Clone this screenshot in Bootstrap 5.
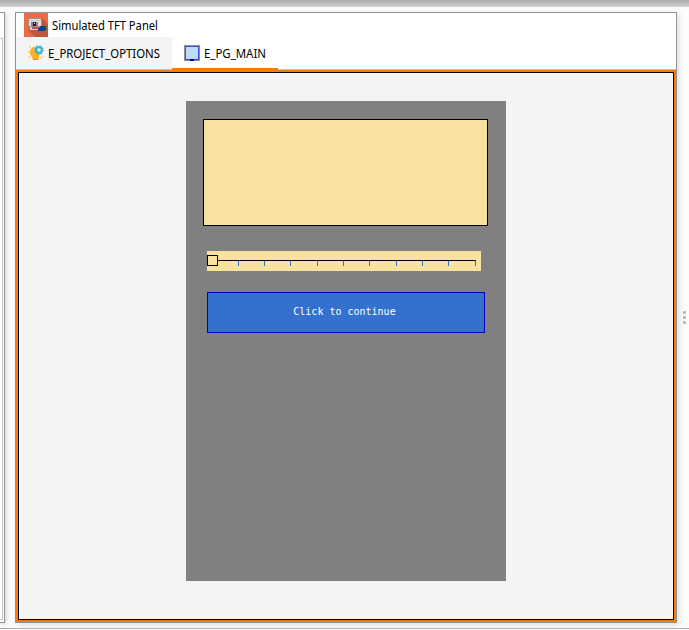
<!DOCTYPE html>
<html lang="en">
<head>
<meta charset="utf-8">
<meta name="viewport" content="width=device-width, initial-scale=1">
<title>Simulated TFT Panel</title>
<link rel="stylesheet" href="https://cdn.jsdelivr.net/npm/bootstrap@5.3.0/dist/css/bootstrap.min.css">
<style>
body{width:689px;height:630px;background:#fcfcfc;font:12px/16px "Noto Sans","Open Sans",sans-serif;color:#000}
.topstrip{height:7px;background:linear-gradient(#aaa,#d2d2d2);flex:none}
.workspace{height:622px;padding-top:5px;border-bottom:1px solid #ababab}
.side-pane{width:5px;height:611px;border:solid #939393;border-width:1px 1px 1px 0;background:#fff;box-shadow:1px 1px 5px #ccc;padding-top:25px}
.side-pane div{width:3px;height:582px;border:solid #c4c4c4;border-width:1px 1px 1px 0;background:#fff}
.tft{width:662px;height:611px;margin-left:10px;border:1px solid #939393;background:#fff;box-shadow:2px 2px 6px #ddd}
.title-row{height:24px;padding-left:8px}
.title-row svg,.tab svg{flex:none;display:block}
.tabs{height:33px;border-bottom:1px solid #c0c0c0}
.tab{height:32px}
.tab-a{width:156px;background:#f4f4f4;padding-left:12px}
.tab-b{width:106px;padding-left:12px;border-bottom:2px solid #fb7b00;height:33px}
.canvas-wrap{height:552px;border:2px solid #fb7b00}
.canvas-in{height:548px;border:1px solid #000;background:#f4f4f4;padding:28px 0 0 167px}
.screen{width:320px;height:480px;background:#808080;padding:18px 0 0 17px}
.textbox{width:285px;height:107px;border:1px solid #000;background:#f9e2a0}
.slider{width:274px;height:20px;margin:25px 0 21px 4px;background:#f9e2a0}
.slider svg{display:block}
.tft-btn{width:278px;height:41px;margin-left:4px;border:1px solid #0000c0;border-radius:0;background:#3470cd;color:#fff;font:10px/12px "DejaVu Sans Mono",monospace;padding:0 3px 1px 0}
.grip{width:3px;margin-left:6px;padding-top:299px;gap:2px}
.grip i{width:3px;height:3px;background:#b8b8b8;border-radius:1px}
</style>
<script src="https://cdn.jsdelivr.net/npm/bootstrap@5.3.0/dist/js/bootstrap.bundle.min.js"></script>
</head>
<body class="overflow-hidden d-flex flex-column">
<div class="topstrip"></div>
<main class="workspace d-flex align-items-start">
  <aside class="side-pane"><div></div></aside>
  <section class="tft">
    <header class="title-row d-flex align-items-center">
      <svg width="24" height="24"><path fill="#e86c47" d="M0 0h24v24H0z"/><path fill="#bd583c" d="M18 5l6 6v13H11l-7-7z"/><path fill="#e4e2dc" stroke="#8c8780" stroke-width=".8" d="M4.500 5.500h13v8h-13z"/><path fill="#c8c6c2" d="M5 7h12v1H5z"/><path fill="#888" d="M7 9h7v4H7z"/><path fill="#222" d="M9 9h3v4H9z"/><path fill="#fff" d="M10 10h1v1h-1z"/><path fill="#d4d2cc" d="M6 14h2v2h7v1H6z"/><path fill="#777" d="M8 14h6v1H8z"/><path fill="#173d89" d="M16 13h6v4h-1v1h-7v-3h2z"/></svg>
      <svg class="ms-1 overflow-visible" width="120" height="17"><text x="0" y="13" textLength="106" lengthAdjust="spacingAndGlyphs">Simulated TFT Panel</text></svg>
    </header>
    <nav class="tabs d-flex">
      <div class="tab tab-a d-flex align-items-center">
        <svg width="16" height="16"><path fill="#ffb126" d="M5 2h4l1 3h3v3l-2 3v2l-1 2H5l-1-3-2-3V5z"/><path stroke="#f5bd65" d="M0 7h2M1 1l2 2M0 13l3-2M14 11l1 1M12 13h2"/><circle cx="11" cy="5" r="2.800" fill="#e9f7fa" stroke="#2eb4d8" stroke-width="2"/><circle cx="11" cy="5" r="4.200" fill="none" stroke="#2eb4d8" stroke-width="1.200" stroke-dasharray="1.700 1.600"/><path stroke="#e58a18" d="M5 14.500h5"/></svg>
        <svg class="ms-1 overflow-visible" width="122" height="18"><text x="0" y="14" textLength="112" lengthAdjust="spacingAndGlyphs">E_PROJECT_OPTIONS</text></svg>
      </div>
      <div class="tab tab-b d-flex align-items-center">
        <svg width="16" height="16" shape-rendering="crispEdges"><path fill="#919195" d="M0 0h16v16H0z"/><path fill="#bcdcfa" stroke="#4646e7" d="M1.500 1.500h13v13h-13z"/><path fill="#0000b5" d="M6 14h4v2H6z"/></svg>
        <svg class="ms-1 overflow-visible" width="70" height="18"><text x="0" y="14" textLength="62" lengthAdjust="spacingAndGlyphs">E_PG_MAIN</text></svg>
      </div>
    </nav>
    <div class="canvas-wrap"><div class="canvas-in">
      <div class="screen">
        <div class="textbox"></div>
        <div class="slider"><svg width="274" height="20" shape-rendering="crispEdges"><path stroke="#000" d="M0 9.500h269"/><path stroke="#3470cd" d="M31.500 10v5M57.500 10v5M83.500 10v5M110.500 10v5M136.500 10v5M162.500 10v5M189.500 10v5M215.500 10v5M241.500 10v5M268.500 10v5"/><path fill="#f9e2a0" stroke="#000" d="M.5 4.500h10v10H.5z"/></svg></div>
        <button class="tft-btn btn d-flex align-items-center justify-content-center" type="button">Click to continue</button>
      </div>
    </div></div>
  </section>
  <div class="grip d-flex flex-column"><i></i><i></i><i></i></div>
</main>
</body>
</html>
